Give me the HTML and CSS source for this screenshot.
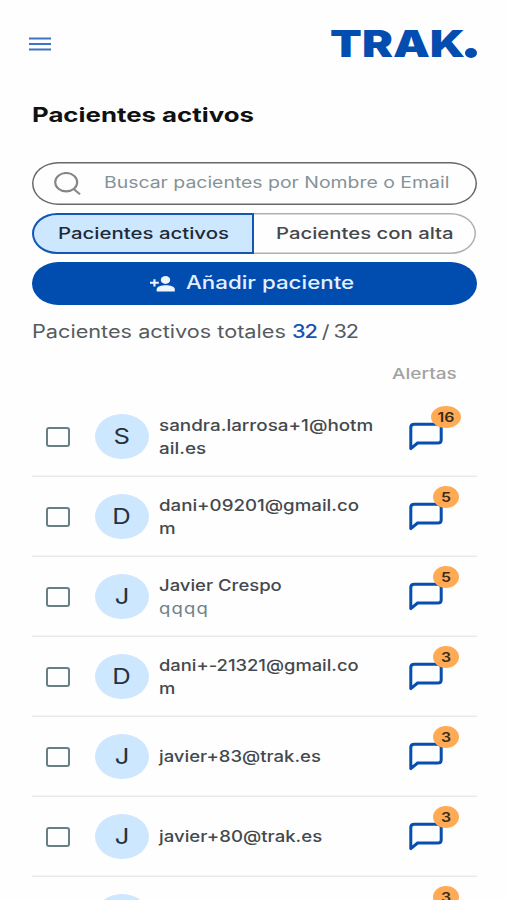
FILE: index.html
```html
<!DOCTYPE html>
<html lang="es">
<head>
<meta charset="utf-8">
<title>Pacientes activos</title>
<link rel="stylesheet" href="styles.css">
</head>
<body>
<svg class="sprite" aria-hidden="true">
  <symbol id="message" viewBox="0 0 34 30" preserveAspectRatio="none">
    <path d="M1.8 26.6V5.2Q1.8 2.2 5.2 2.2H28.8Q32.2 2.2 32.2 5.2V18Q32.2 21 28.8 21H8.6Z" fill="none" stroke="#084db0" stroke-width="3" stroke-linejoin="round"/>
  </symbol>
</svg>
<header class="topbar">
  <svg class="menu" viewBox="0 0 22 14"><path d="M0 1.5H22M0 7H22M0 12.5H22" stroke="#3d74c3" stroke-width="2"/></svg>
  <div class="logo"><span class="t logo-text">TRAK</span><span class="dot">.</span></div>
</header>
<main>
  <h1><span class="t title">Pacientes activos</span></h1>
  <div class="search">
    <svg class="lens" viewBox="0 0 28 24"><ellipse cx="12.2" cy="10.2" rx="11" ry="9.2"/><path d="M19.6 17L26 22.3"/></svg>
    <span class="t hint">Buscar pacientes por Nombre o Email</span>
  </div>
  <div class="tabs">
    <div class="tab selected"><span class="t tab-a">Pacientes activos</span></div>
    <div class="tab"><span class="t tab-b">Pacientes con alta</span></div>
  </div>
  <div class="add">
    <svg class="person" viewBox="0 0 25 16"><ellipse cx="15.5" cy="4" rx="4.7" ry="3.9"/><path d="M6.7 15.4V13.2C6.7 10.5 11.5 9.3 15.8 9.3S24.8 10.5 24.8 13.2V15.4Z"/><path d="M3.4 3.2H5.5V5.8H8.8V7.8H5.5V10.4H3.4V7.8H0V5.8H3.4Z"/></svg>
    <span class="t add-text">Añadir paciente</span>
  </div>
  <p class="total"><span class="t total-text">Pacientes activos totales <span class="count"><b>32</b> / 32</span></span></p>
  <div class="heading"><span class="t alerts">Alertas</span></div>
  <ul class="list">
    <li><i class="check"></i><span class="avatar"><span class="t">S</span></span><span class="name"><span class="t n1">sandra.larrosa+1@hotm<br>ail.es</span></span><span class="alert"><svg><use href="#message"/></svg><b class="badge wide"><span class="t">16</span></b></span></li>
    <li><i class="check"></i><span class="avatar"><span class="t">D</span></span><span class="name"><span class="t n2">dani+09201@gmail.co<br>m</span></span><span class="alert"><svg><use href="#message"/></svg><b class="badge"><span class="t">5</span></b></span></li>
    <li><i class="check"></i><span class="avatar"><span class="t">J</span></span><span class="name"><span class="t n3">Javier Crespo<br><em>qqqq</em></span></span><span class="alert"><svg><use href="#message"/></svg><b class="badge"><span class="t">5</span></b></span></li>
    <li><i class="check"></i><span class="avatar"><span class="t">D</span></span><span class="name"><span class="t n4">dani+-21321@gmail.co<br>m</span></span><span class="alert"><svg><use href="#message"/></svg><b class="badge"><span class="t">3</span></b></span></li>
    <li><i class="check"></i><span class="avatar"><span class="t">J</span></span><span class="name"><span class="t n5">javier+83@trak.es</span></span><span class="alert"><svg><use href="#message"/></svg><b class="badge"><span class="t">3</span></b></span></li>
    <li><i class="check"></i><span class="avatar"><span class="t">J</span></span><span class="name"><span class="t n6">javier+80@trak.es</span></span><span class="alert"><svg><use href="#message"/></svg><b class="badge"><span class="t">3</span></b></span></li>
    <li><i class="check"></i><span class="avatar"></span><span class="name"></span><span class="alert"><svg><use href="#message"/></svg><b class="badge"><span class="t">3</span></b></span></li>
  </ul>
</main>
</body>
</html>
```
FILE: styles.css
```css
* { box-sizing: border-box; }
html, body { height: 900px; overflow: hidden; }
body { margin: 0; background: #fefefe; font-family: Inter, "Liberation Sans", sans-serif; font-size: 16px; font-weight: 500; color: #44494d; }
.sprite { display: none; }
.t { display: inline-block; white-space: nowrap; transform: scaleX(1.22); transform-origin: left center; }
.topbar { height: 88px; padding: 0 30px 0 29px; display: flex; align-items: center; justify-content: space-between; }
.menu { width: 22px; height: 14px; }
.logo { display: flex; width: 147px; color: #034cb0; font-weight: 900; font-size: 37px; line-height: 44px; }
.t.logo-text { width: 135px; transform: scaleX(1.255); }
.dot { width: 12px; height: 10px; margin-top: 26px; border-radius: 50%; background: #034cb0; color: transparent; font-size: 10px; line-height: 10px; }
main { height: 812px; overflow: hidden; padding: 0 30px 0 32px; }
h1 { margin: 0; height: 74px; padding-top: 13px; font-size: 20px; line-height: 28px; font-weight: 700; color: #111; }
.t.title { transform: scaleX(1.29); }
.search { height: 43px; display: flex; align-items: center; box-shadow: inset 0 0 0 1.5px #686868; border-radius: 27px / 22px; padding-left: 22px; }
.lens { width: 28px; height: 24px; fill: none; stroke: #858585; stroke-width: 2.1; }
.t.hint { margin-left: 22px; margin-top: -3px; color: #849397; font-weight: 400; transform: scaleX(1.213); }
.tabs { margin-top: 8px; height: 41px; width: 444px; display: flex; }
.tab { width: 224px; margin-left: -2px; box-shadow: inset 0 0 0 1.5px #b0b0b0; border-radius: 0 27px 27px 0 / 0 22px 22px 0; padding-left: 24px; line-height: 40px; color: #45484b; }
.tab.selected { position: relative; z-index: 1; width: 222px; margin-left: 0; box-shadow: inset 0 0 0 2px #1257b5; border-radius: 27px 0 0 27px / 22px 0 0 22px; background: #cde7ff; color: #1d2a38; padding-left: 26px; }
.t.tab-a { transform: scaleX(1.275); }
.t.tab-b { transform: scaleX(1.27); }
.add { margin-top: 8px; height: 43px; border-radius: 27px / 22px; background: #004caf; color: #e5efff; display: flex; align-items: center; padding-left: 118px; font-size: 18px; }
.person { width: 25px; height: 16px; fill: #eef5ff; }
.t.add-text { margin-left: 11px; margin-top: -2px; transform: scaleX(1.24); }
.total { margin: 14px 0 0; height: 26px; line-height: 26px; font-size: 18px; font-weight: 400; color: #555b60; }
.t.total-text { transform: scaleX(1.204); }
.count { letter-spacing: -0.9px; }
.total b { font-weight: 500; color: #1454b4; }
.heading { height: 52px; padding: 18px 0 0 360px; font-size: 15px; line-height: 22px; color: #a2a2a2; }
.t.alerts { transform: scaleX(1.27); }
.list { list-style: none; margin: 0; padding: 0; }
li { height: 80px; padding-bottom: 1px; display: flex; align-items: center; box-shadow: inset 0 -1.5px #e9e9e9; }
.check { width: 24px; height: 20px; margin-left: 14px; border: 2px solid #687f88; border-radius: 3px; }
.avatar { width: 54px; height: 45px; margin-left: 25px; border-radius: 50%; background: #cde7ff; color: #26323b; font-size: 21px; font-weight: 400; display: flex; align-items: center; justify-content: center; }
.avatar .t, .badge .t { transform-origin: center; }
.name { width: 250px; margin-left: 10px; line-height: 23px; }
.name em { font-style: normal; color: #6d8289; font-weight: 400; letter-spacing: 1px; }
.n1.t { transform: scaleX(1.177); }
.n2.t { transform: scaleX(1.168); }
.n3.t { transform: scaleX(1.155); }
.n4.t { transform: scaleX(1.147); }
.n5.t { transform: scaleX(1.156); }
.n6.t { transform: scaleX(1.163); }
.alert { position: relative; width: 34px; height: 30px; }
.alert svg { display: block; width: 34px; height: 30px; }
.badge { position: absolute; left: 24px; top: -16px; width: 26px; height: 22px; border-radius: 50%; background: #ffab55; color: #3a2c1c; font-size: 13px; font-weight: 600; line-height: 22px; text-align: center; }
.badge.wide { left: 22px; width: 30px; }
```
